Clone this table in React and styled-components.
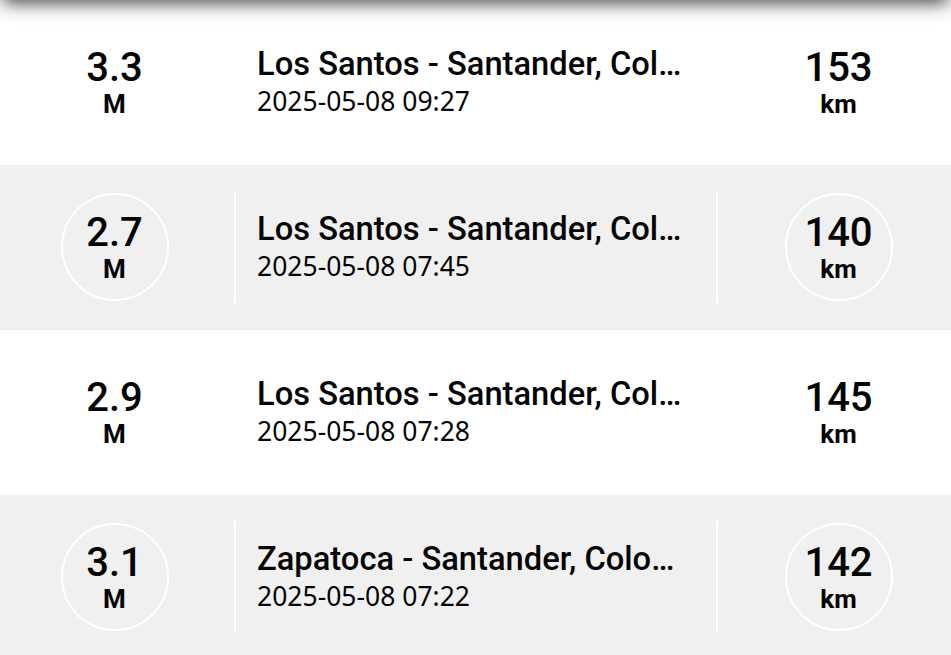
import React from 'react';
import styled, { createGlobalStyle } from 'styled-components';

const GlobalStyle = createGlobalStyle`
  html, body {
    margin: 0;
    padding: 0;
    overflow: hidden;
    background: #fff;
  }
`;

const TopBar = styled.div`
  position: fixed;
  top: -60px;
  left: 0;
  right: 0;
  height: 60px;
  background: #fff;
  box-shadow: 0 6px 18px -3px rgba(0, 0, 0, 0.75);
  z-index: 2;
`;

const List = styled.div`
  display: flex;
  flex-direction: column;
`;

const Row = styled.div`
  display: grid;
  grid-template-columns: 234px 2px 1fr 2px 233px;
  align-items: center;
  height: 164px;
  background: ${(p) => (p.$alt ? '#f0f0f0' : '#fff')};
  border-bottom: 1px solid ${(p) => (p.$alt ? '#ebebeb' : '#fff')};
`;

const Cell = styled.div`
  display: flex;
  justify-content: center;
  align-items: center;
  padding-left: ${(p) => p.$left || 0}px;
  padding-right: ${(p) => p.$right || 0}px;
`;

const Badge = styled.div`
  width: 104px;
  height: 104px;
  border: 2px solid #fff;
  border-radius: 50%;
  display: flex;
  flex-direction: column;
  align-items: center;
  justify-content: center;
  font-family: Roboto, "Liberation Sans", sans-serif;
  color: #050505;
`;

const Value = styled.div`
  font-size: 40px;
  font-weight: 500;
  line-height: 42px;
`;

const Unit = styled.div`
  font-size: 26px;
  font-weight: 700;
  line-height: 28px;
  margin-top: 1px;
`;

const Divider = styled.div`
  width: 2px;
  height: 112px;
  background: #fff;
`;

const Info = styled.div`
  min-width: 0;
  padding: 0 26px 0 21px;
  color: #050505;
`;

const Place = styled.div`
  font-family: Roboto, "Liberation Sans", sans-serif;
  font-size: 32.7px;
  font-weight: 500;
  line-height: 37px;
  white-space: nowrap;
  overflow: hidden;
  text-overflow: ellipsis;
`;

const When = styled.div`
  font-family: "Noto Sans", "Open Sans", sans-serif;
  font-size: 26.5px;
  line-height: 36px;
`;

const quakes = [
  { mag: '3.3', place: 'Los Santos - Santander, Colombia', time: '2025-05-08 09:27', depth: 153 },
  { mag: '2.7', place: 'Los Santos - Santander, Colombia', time: '2025-05-08 07:45', depth: 140 },
  { mag: '2.9', place: 'Los Santos - Santander, Colombia', time: '2025-05-08 07:28', depth: 145 },
  { mag: '3.1', place: 'Zapatoca - Santander, Colombia', time: '2025-05-08 07:22', depth: 142 },
];

export default function App() {
  return (
    <>
      <GlobalStyle />
      <TopBar />
      <List>
        {quakes.map((q, i) => (
          <Row key={i} $alt={i % 2 === 1}>
            <Cell $right={5}>
              <Badge>
                <Value>{q.mag}</Value>
                <Unit>M</Unit>
              </Badge>
            </Cell>
            <Divider />
            <Info>
              <Place>{q.place}</Place>
              <When>{q.time}</When>
            </Info>
            <Divider />
            <Cell $left={8}>
              <Badge>
                <Value>{q.depth}</Value>
                <Unit>km</Unit>
              </Badge>
            </Cell>
          </Row>
        ))}
      </List>
    </>
  );
}
